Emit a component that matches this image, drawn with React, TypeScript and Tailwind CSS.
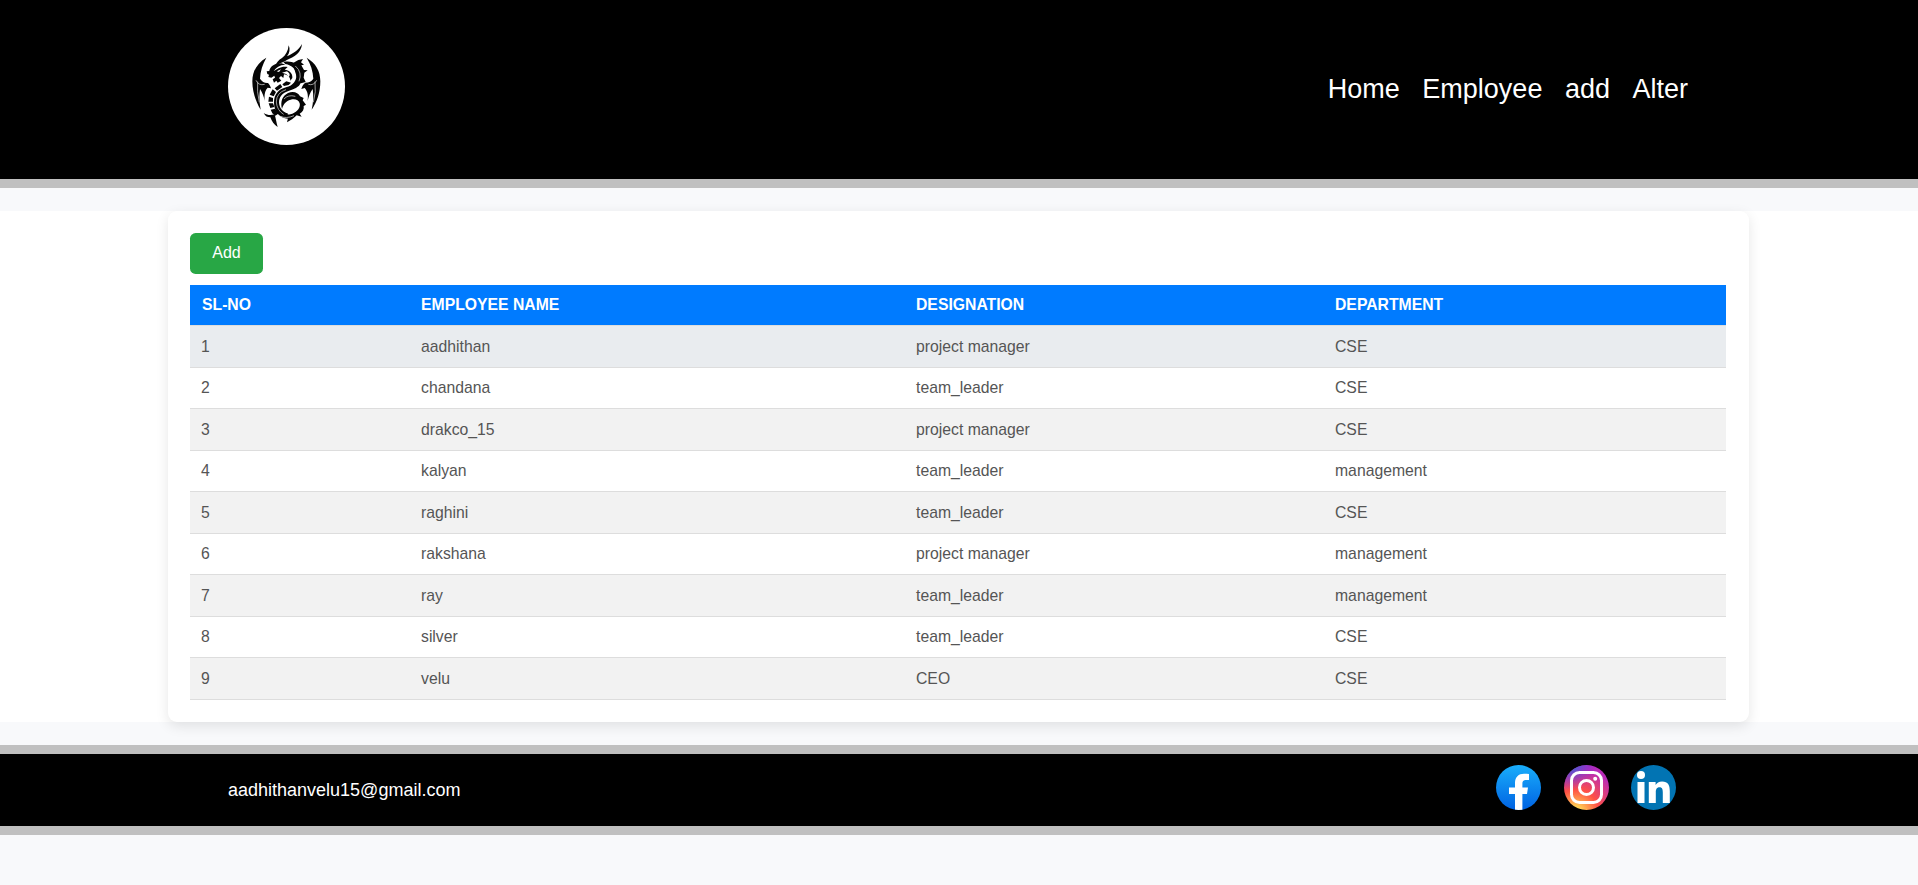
const employees = [
  { name: "aadhithan", designation: "project manager", department: "CSE" },
  { name: "chandana", designation: "team_leader", department: "CSE" },
  { name: "drakco_15", designation: "project manager", department: "CSE" },
  { name: "kalyan", designation: "team_leader", department: "management" },
  { name: "raghini", designation: "team_leader", department: "CSE" },
  { name: "rakshana", designation: "project manager", department: "management" },
  { name: "ray", designation: "team_leader", department: "management" },
  { name: "silver", designation: "team_leader", department: "CSE" },
  { name: "velu", designation: "CEO", department: "CSE" },
];

const columns = "grid grid-cols-[220px_495px_419px_1fr] pl-[11px]";

function DragonLogo() {
  return (
    <svg viewBox="24 24 351 351" className="size-[117px]" aria-label="Dragon">
      <circle cx="199.500" cy="199.500" r="175.500" fill="#fff" />
      <g fill="#050505">
        {/* wings */}
        <path d="M139 113C112 129 97 153 97 184C97 216 108 247 122 269C118 247 117 227 120 207C127 218 132 230 134 243C132 224 135 211 143 203L153 205C151 198 149 194 144 189C134 190 126 185 120 176C121 153 128 132 139 113Z" />
        <path d="M260 113C287 129 301 153 301 184C301 216 291 247 275 269C280 247 281 227 278 207C270 218 266 230 263 243C265 226 263 214 254 204L244 207C247 198 249 193 256 188C267 188 275 184 280 176C279 153 272 132 260 113Z" />
        {/* horns */}
        <path d="M206 76C204 94 197 106 186 114C176 120 169 128 166 138C178 129 190 127 202 119C224 111 244 97 246 72C235 91 220 100 201 109C209 99 211 87 206 76Z" />
        {/* head */}
        <path d="M167 132C154 137 149 146 148 153L140 154L142 162L147 164L145 171L154 173L163 167L165 173L158 178L162 188L169 182L173 188L184 182L177 174L183 168L190 174L192 163C203 164 211 172 211 182L217 174C219 160 207 149 194 149L203 141C184 137 172 147 161 153C168 143 181 133 197 134L184 130Z" />
        {/* neck */}
        <path d="M190 126C214 121 233 130 243 148C252 164 249 184 237 197C226 207 209 211 198 216C181 224 175 238 178 254C181 268 192 277 203 280L204 296C179 295 162 274 162 248C162 224 175 208 198 202C220 196 230 182 229 164C228 148 216 136 196 132Z" />
        {/* back spikes */}
        <path d="M218 130L235 120L249 117L243 127L252 134L244 136L252 150L263 151L253 158L251 173L257 186L243 190L232 177Z" />
        {/* coiled tail body */}
        <path d="M186 267C180 244 188 227 204 219C220 212 235 218 240 229L251 234L248 241L258 254L251 258C253 268 248 276 239 281L245 290L230 286C222 295 211 301 201 307L204 294C188 293 178 285 173 273C184 285 201 286 217 281C233 275 242 262 239 250C236 239 225 236 212 239C198 243 190 252 186 267Z" />
        {/* belly plates */}
        <path d="M199 184L213 188L206 195L192 198L187 193Z" />
        <path d="M181 192L187 201L171 212L164 205Z" />
        <path d="M158 208L168 216L161 229L149 224Z" />
        <path d="M147 230L159 234L159 245L145 245Z" />
        <path d="M146 250L159 250L163 261L151 264Z" />
        <path d="M152 269L165 266L177 280L166 287L157 280Z" />
        {/* tail */}
        <path d="M164 283C151 287 143 286 131 279C136 289 142 292 151 292C155 304 162 314 173 321C169 308 168 298 164 283Z" />
      </g>
      <g fill="none" stroke="#bbb" strokeWidth="2.500">
        <path d="M108 181Q116 198 134 193M113 185Q110 215 118 247M290 181Q281 198 265 193M285 185Q289 215 280 247" />
        <path d="M198 209Q169 218 169 246Q171 271 191 283M226 138Q248 157 237 184" />
        <path d="M192 237Q204 223 226 229M182 289Q198 297 222 287" />
      </g>
      <path d="M170 154L183 148L177 156ZM186 158L201 154Q214 162 206 172Q202 162 191 160Z" fill="#fff" />
    </svg>
  );
}

function FacebookIcon() {
  return (
    <svg viewBox="0 0 45 45" className="size-[45px]" aria-label="Facebook">
      <defs>
        <linearGradient id="facebook-blue" x1="0" y1="0" x2="0" y2="1">
          <stop stopColor="#19aefb" />
          <stop offset="1" stopColor="#0062e2" />
        </linearGradient>
        <clipPath id="facebook-circle"><circle cx="22.500" cy="22.500" r="22.500" /></clipPath>
      </defs>
      <circle cx="22.500" cy="22.500" r="22.500" fill="url(#facebook-blue)" />
      <path clipPath="url(#facebook-circle)" fill="#fff" d="M19 45V29h-6v-6.500h6v-4.500C19 12 22.500 8.700 28 8.700c1.900 0 3.500.2 5 .4v5.800h-3c-2.800 0-3.600 1.600-3.600 3.400v4.200H32L31 29h-4.600v16Z" />
    </svg>
  );
}

function InstagramIcon() {
  return (
    <svg viewBox="0 0 45 45" className="size-[45px]" aria-label="Instagram">
      <defs>
        <radialGradient id="instagram-warm" cx="0.270" cy="1.050" r="1">
          <stop stopColor="#ffdd55" />
          <stop offset="0.120" stopColor="#ffd055" />
          <stop offset="0.500" stopColor="#ff5145" />
          <stop offset="1" stopColor="#b92bb8" />
        </radialGradient>
        <radialGradient id="instagram-cool" cx="0.120" cy="-0.080" r="0.650">
          <stop stopColor="#3771c8" />
          <stop offset="0.250" stopColor="#4b5ed0" />
          <stop offset="1" stopColor="#8a20e0" stopOpacity="0" />
        </radialGradient>
      </defs>
      <circle cx="22.500" cy="22.500" r="22.500" fill="url(#instagram-warm)" />
      <circle cx="22.500" cy="22.500" r="22.500" fill="url(#instagram-cool)" />
      <g fill="none" stroke="#fff" strokeWidth="3">
        <rect x="7.500" y="7.500" width="30" height="30" rx="8" />
        <circle cx="22.500" cy="22.500" r="7" />
      </g>
      <circle cx="31.200" cy="13.800" r="2" fill="#fff" />
    </svg>
  );
}

function LinkedinIcon() {
  return (
    <svg viewBox="0 0 45 45" className="size-[45px]" aria-label="LinkedIn">
      <circle cx="22.500" cy="22.500" r="22.500" fill="#0274b3" />
      <g fill="#fff">
        <circle cx="10" cy="10" r="4" />
        <path d="M6.500 17h7v21h-7ZM17.800 17h6.800v2.900c1-1.900 3.300-3.500 6.500-3.500 6 0 7.700 3.700 7.700 9.600v12h-7V27.500c0-3.100-.5-5.300-3.300-5.300-2.900 0-3.700 2.200-3.700 5.100V38h-7Z" />
      </g>
    </svg>
  );
}

export default function App() {
  return (
    <div className="min-h-screen bg-[#f8f9fb] font-['Liberation_Sans',Arial,sans-serif]">
      <header className="flex h-[188px] items-start justify-between border-b-[9px] border-[#c0c0c0] bg-black pt-7 pr-[230px] pl-[228px]">
        <DragonLogo />
        <nav className="flex gap-[22.5px] pt-[43px] text-[27px] leading-9 text-white">
          <a href="#home">Home</a>
          <a href="#employee">Employee</a>
          <a href="#add">add</a>
          <a href="#alter">Alter</a>
        </nav>
      </header>

      <main className="my-[23px] bg-white">
        <section className="ml-[168px] h-[511px] w-[1581px] rounded-[9px] bg-white px-[22px] pt-[22px] shadow-[0_4px_13px_rgba(0,0,0,0.1)]">
          <button className="block h-[41px] w-[73px] rounded-[5.6px] bg-[#28a745] pb-0.5 text-base text-white">Add</button>
          <div className="mt-[11px] w-[1536px] text-[15.75px]">
            <div className={`${columns} h-[41px] border-b border-[#ddd] bg-[#007bff] pt-2 leading-6 font-bold text-white`}>
              <span className="pl-px">SL-NO</span>
              <span>EMPLOYEE NAME</span>
              <span>DESIGNATION</span>
              <span>DEPARTMENT</span>
            </div>
            {employees.map((employee, index) => (
              <div
                key={employee.name}
                className={`${columns} items-center border-b border-[#ddd] text-[#555] odd:h-[41px] even:h-[42px] ${
                  index === 0 ? "bg-[#e9ecef]" : index % 2 === 0 ? "bg-[#f2f2f2]" : "bg-white"
                }`}
              >
                <span>{index + 1}</span>
                <span>{employee.name}</span>
                <span>{employee.designation}</span>
                <span>{employee.department}</span>
              </div>
            ))}
          </div>
        </section>
      </main>

      <footer className="flex h-[90px] justify-between border-y-[9px] border-[#c0c0c0] bg-black pt-[11px] pr-[242px] pl-[228px] text-lg text-white">
        <span className="pt-[11px] leading-7">aadhithanvelu15@gmail.com</span>
        <div className="flex gap-[22.5px]">
          <FacebookIcon />
          <InstagramIcon />
          <LinkedinIcon />
        </div>
      </footer>
    </div>
  );
}
